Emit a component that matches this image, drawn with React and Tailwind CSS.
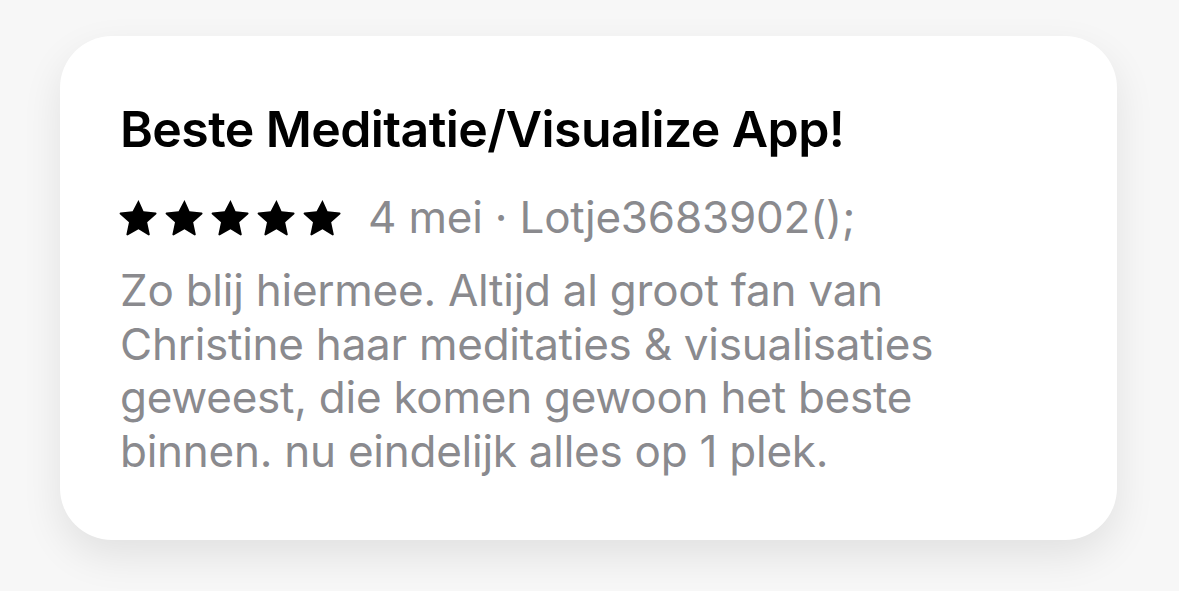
const Star = () => (
  <svg viewBox="0 0 24 24" className="h-[41px] w-[41px]" fill="#000">
    <path
      d="M12 1.8l2.95 6.55 7.1.72c.5.05.7.67.33 1l-5.3 4.77 1.5 7c.1.5-.43.88-.87.62L12 18.9l-6.2 3.56c-.44.26-.97-.12-.87-.62l1.5-7-5.3-4.77c-.37-.33-.17-.95.33-1l7.1-.72z"
      strokeLinejoin="round"
    />
  </svg>
);

function App() {
  return (
    <div className="h-[591px] w-[1179px] overflow-hidden bg-[#f7f7f7] pl-[60px] pt-[36px] font-['Inter','Liberation_Sans',sans-serif]">
      <div className="h-[504px] w-[1057px] rounded-[52px] bg-white pl-[60px] pt-[63px] shadow-[0_16px_40px_rgba(0,0,0,0.09)]">
        <h1 className="text-[50px] font-semibold leading-[60px] tracking-[-0.6px] text-black">
          Beste Meditatie/Visualize App!
        </h1>
        <div className="mt-[36px] flex h-[44px] items-center">
          <div className="-ml-[2px] flex gap-[5px]">
            <Star />
            <Star />
            <Star />
            <Star />
            <Star />
          </div>
          <span className="ml-[25px] text-[44px] leading-[44px] tracking-[-0.2px] text-[#8a8a8e]">
            4 mei · Lotje3683902();
          </span>
        </div>
        <p className="mt-[25px] w-[880px] text-[44px] leading-[53.5px] tracking-[-0.25px] text-[#8a8a8e]">
          Zo blij hiermee. Altijd al groot fan van Christine haar meditaties &amp; visualisaties geweest, die komen gewoon het beste binnen. nu eindelijk alles op 1 plek.
        </p>
      </div>
    </div>
  );
}

export default App;
